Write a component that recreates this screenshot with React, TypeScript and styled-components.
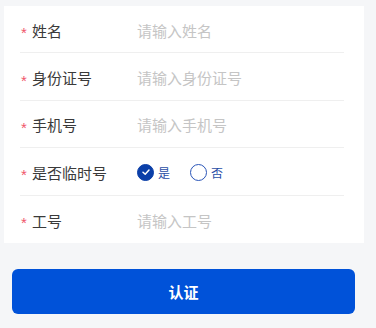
import styled, { createGlobalStyle } from "styled-components";

const GlobalStyle = createGlobalStyle`
  html, body {
    margin: 0;
    padding: 0;
    background: #f5f6f8;
    font-family: "Noto Sans CJK SC", "Noto Sans", sans-serif;
  }
`;

const fields = [
  { label: "姓名", placeholder: "请输入姓名" },
  { label: "身份证号", placeholder: "请输入身份证号" },
  { label: "手机号", placeholder: "请输入手机号" },
];

export default function App() {
  return (
    <>
      <GlobalStyle />
      <Page>
        <Card>
          {fields.map((f) => (
            <Row key={f.label}>
              <Label>
                <Star>*</Star>
                {f.label}
              </Label>
              <Input placeholder={f.placeholder} />
            </Row>
          ))}
          <Row>
            <Label>
              <Star>*</Star>
              是否临时号
            </Label>
            <RadioGroup>
              <RadioItem>
                <RadioCircle checked>
                  <svg width="10" height="10" viewBox="0 0 10 10">
                    <path d="M2 5.2 L4.2 7.2 L8 3" fill="none" stroke="#fff" strokeWidth="1.5" strokeLinecap="round" strokeLinejoin="round" />
                  </svg>
                </RadioCircle>
                <RadioText>是</RadioText>
              </RadioItem>
              <RadioItem>
                <RadioCircle />
                <RadioText>否</RadioText>
              </RadioItem>
            </RadioGroup>
          </Row>
          <Row last>
            <Label>
              <Star>*</Star>
              工号
            </Label>
            <Input placeholder="请输入工号" />
          </Row>
        </Card>
        <SubmitButton>认证</SubmitButton>
      </Page>
    </>
  );
}

const Page = styled.div`
  width: 376px;
  height: 328px;
  padding: 6px 12px 0 4px;
  box-sizing: border-box;
`;

const Card = styled.div`
  background: #fff;
  width: 360px;
  padding: 0 20px 0 16px;
  box-sizing: border-box;
`;

const Row = styled.div<{ last?: boolean }>`
  display: flex;
  align-items: center;
  height: 47.4px;
  box-sizing: border-box;
  padding-top: 2px;
  border-bottom: ${(p) => (p.last ? "none" : "1px solid #efefef")};
`;

const Label = styled.div`
  display: flex;
  align-items: center;
  width: 117px;
  flex-shrink: 0;
  font-size: 15px;
  color: #3a3a3a;
`;

const Star = styled.span`
  color: #f0566a;
  font-size: 15px;
  font-family: "Liberation Sans", sans-serif;
  line-height: 1;
  width: 12px;
  margin-top: 5px;
  padding-left: 1px;
  box-sizing: border-box;
`;

const Input = styled.input`
  flex: 1;
  border: none;
  outline: none;
  padding: 0;
  font-size: 15px;
  font-family: inherit;
  color: #333;
  background: transparent;
  &::placeholder {
    color: #c5c5c5;
  }
`;

const RadioGroup = styled.div`
  display: flex;
  align-items: center;
  gap: 20px;
`;

const RadioItem = styled.label`
  display: flex;
  align-items: center;
  gap: 4px;
`;

const RadioCircle = styled.span<{ checked?: boolean }>`
  width: 17px;
  height: 17px;
  border-radius: 50%;
  box-sizing: border-box;
  display: flex;
  align-items: center;
  justify-content: center;
  background: ${(p) => (p.checked ? "#0b3fa8" : "#fff")};
  border: 1.5px solid ${(p) => (p.checked ? "#0b3fa8" : "#2a55b8")};
`;

const RadioText = styled.span`
  font-size: 12px;
  color: #2a4ea6;
`;

const SubmitButton = styled.button`
  display: block;
  width: 343px;
  height: 45px;
  margin: 26px 0 0 8px;
  border: none;
  border-radius: 6px;
  background: #0052d9;
  color: #fff;
  font-size: 15px;
  font-weight: 700;
  font-family: inherit;
`;
